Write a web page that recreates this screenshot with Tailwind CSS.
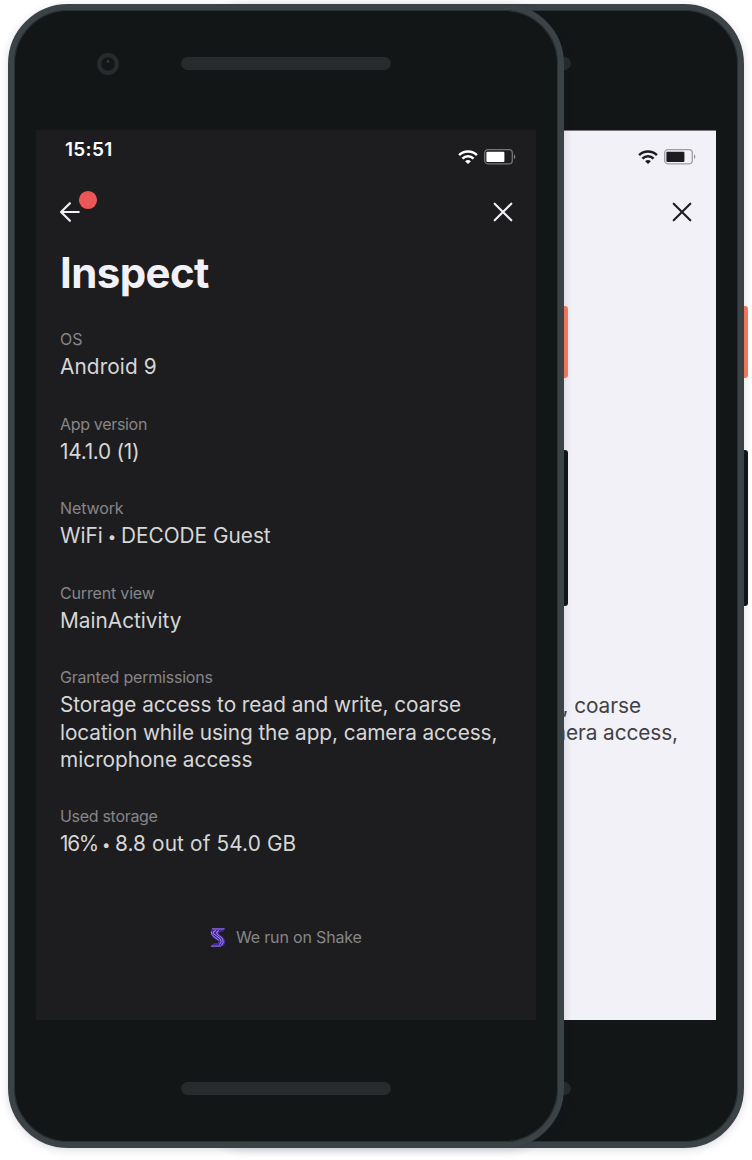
<!DOCTYPE html>
<html lang="en">
<head>
<meta charset="utf-8">
<title>Inspect</title>
<script src="https://cdn.jsdelivr.net/npm/@tailwindcss/browser@4"></script>
</head>
<body class="relative h-[1160px] w-[752px] overflow-hidden bg-white font-['Inter',sans-serif]">
<svg class="hidden">
  <symbol id="wifi" viewBox="0 0 20 14"><g fill="none" stroke="currentColor" stroke-width="2.5"><path d="M1.1 5.1a12.6 12.6 0 0 1 17.8 0"/><path d="M4.4 8.7a7.9 7.9 0 0 1 11.2 0"/></g><path d="M10 13.9 7.1 11.3a4.2 4.2 0 0 1 5.8 0Z" fill="currentColor"/></symbol>
  <symbol id="battery" viewBox="0 0 32 16"><rect x=".7" y=".7" width="27.6" height="14.1" rx="3.2" fill="none" stroke="currentColor" stroke-opacity=".4" stroke-width="1.3"/><rect x="2.4" y="2.7" width="18" height="10.2" rx="1" fill="currentColor"/><path d="M30 5.3c1.8.8 1.8 4 0 4.9Z" fill="currentColor" opacity=".45"/></symbol>
  <symbol id="close" viewBox="0 0 20 20"><path d="m1.7 1.7 16.6 16.6M18.3 1.7 1.7 18.3" fill="none" stroke="currentColor" stroke-width="2.1" stroke-linecap="round"/></symbol>
</svg>

<!-- Light phone, behind -->
<div class="absolute left-[188px] top-1 h-[1144px] w-[556px]">
  <div class="absolute left-[550px] top-[302.4px] h-[72px] w-[10px] rounded-[3px] bg-[#fb7b5b]"></div>
  <div class="absolute left-[550px] top-[446.4px] h-[156px] w-[10px] rounded-[3px] bg-[#111516]"></div>
  <div class="relative flex h-full flex-col items-center rounded-[60px] border-6 border-[#3c4347] bg-[#121617] shadow-[0_2px_8px_rgba(30,30,70,0.16),inset_0_0_0_1px_#2b3134]">
    <div class="mt-[47px] h-[13px] w-[210px] rounded-full bg-[#272b2d]"></div>
    <div class="mt-[60px] flex h-[890px] w-[500px] flex-col border-t border-[#77777b] bg-[#f2f1f7] text-[#1d1d1f]">
      <div class="flex justify-end gap-[5.5px] pr-[20.5px] pt-[18px]">
        <svg class="mt-px h-[14px] w-[20px]"><use href="#wifi"/></svg>
        <svg class="h-4 w-8"><use href="#battery"/></svg>
      </div>
      <div class="mt-[37px] flex justify-end pr-6"><svg class="h-5 w-5"><use href="#close"/></svg></div>
      <div class="mt-[470px] text-right text-[20.8px] leading-[27.2px] text-[#414144]">
        <p class="pr-[75px] tracking-[-0.06px]">, coarse</p>
        <p class="pr-[38px] tracking-[-0.09px]">mera access,</p>
      </div>
    </div>
    <div class="mt-[62px] h-[13px] w-[210px] rounded-full bg-[#272b2d]"></div>
  </div>
</div>

<!-- Dark phone, in front -->
<div class="absolute left-2 top-1 h-[1144px] w-[556px]">
  <div class="absolute left-[550px] top-[302.4px] h-[72px] w-[10px] rounded-[3px] bg-[#fb7b5b]"></div>
  <div class="absolute left-[550px] top-[446.4px] h-[156px] w-[10px] rounded-[3px] bg-[#111516]"></div>
  <div class="relative flex h-full flex-col items-center rounded-[60px] border-6 border-[#3c4347] bg-[#121617] shadow-[0_2px_8px_rgba(30,30,70,0.16),inset_0_0_0_1px_#2b3134]">
    <svg class="absolute left-[83px] top-[43px] h-[22px] w-[22px]"><circle cx="11" cy="11" r="8.8" fill="none" stroke="#272b2d" stroke-width="4.2"/><circle cx="11" cy="8.5" r="1.4" fill="#34393b"/></svg>
    <div class="mt-[47px] h-[13px] w-[210px] rounded-full bg-[#272b2d]"></div>
    <div class="mt-[60px] flex h-[890px] w-[500px] flex-col bg-[#1d1d1f] text-white">
      <div class="flex justify-between pl-[29px] pr-[20.5px]">
        <span class="pt-[10px] text-[19px] font-semibold leading-5 tracking-[0.3px]">15:51</span>
        <div class="flex gap-[5.5px] pt-[19px]">
          <svg class="mt-px h-[14px] w-[20px]"><use href="#wifi"/></svg>
          <svg class="h-4 w-8"><use href="#battery"/></svg>
        </div>
      </div>
      <div class="mt-[25px] flex h-[32px] items-end justify-between pl-6 pr-[23px] text-[#f2f1f7]">
        <svg class="h-[32px] w-[38px]" viewBox="0 0 38 32"><path d="M9.9 13.3 1.1 22l8.8 8.7M1.3 22H18.7" fill="none" stroke="currentColor" stroke-width="2.2" stroke-linecap="round" stroke-linejoin="round"/><circle cx="28" cy="10" r="9.1" fill="#eb5757"/></svg>
        <svg class="h-5 w-5"><use href="#close"/></svg>
      </div>
      <h1 class="ml-6 mt-[26px] text-[42px] font-bold leading-[50px] tracking-[-0.6px] text-[#f2f1f7]">Inspect</h1>
      <dl class="ml-6 mt-[31px] flex flex-col gap-[33px] whitespace-nowrap text-[20.8px] leading-[27.2px] text-[#d6d6d7]">
        <div><dt class="mb-[4.3px] text-[16px] leading-5 text-[#868688]">OS</dt><dd class="tracking-[0.1px]">Android 9</dd></div>
        <div><dt class="mb-[4.3px] text-[16px] leading-5 tracking-[-0.32px] text-[#868688]">App version</dt><dd class="tracking-[-0.25px]">14.1.0 (1)</dd></div>
        <div><dt class="mb-[4.3px] text-[16px] leading-5 tracking-[-0.12px] text-[#868688]">Network</dt><dd>WiFi <span class="-mx-px align-[1px] text-[15px] leading-none">•</span> DECODE Guest</dd></div>
        <div><dt class="mb-[4.3px] text-[16px] leading-5 tracking-[-0.17px] text-[#868688]">Current view</dt><dd>MainActivity</dd></div>
        <div><dt class="mb-[4.3px] text-[16px] leading-5 tracking-[-0.21px] text-[#868688]">Granted permissions</dt><dd><span class="tracking-[-0.06px]">Storage access to read and write, coarse</span><br><span class="tracking-[-0.09px]">location while using the app, camera access,</span><br>microphone access</dd></div>
        <div><dt class="mb-[4.3px] text-[16px] leading-5 tracking-[-0.3px] text-[#868688]">Used storage</dt><dd class="tracking-[0.13px]"><span class="tracking-[-1.3px]">16%</span> <span class="-ml-[2px] -mr-[1.5px] align-[1px] text-[15px] leading-none">•</span> 8.8 out of 54.0 GB</dd></div>
      </dl>
      <div class="mt-[69.6px] flex h-5 items-center gap-[10px] pl-[174px] text-[16px] tracking-[-0.17px] text-[#868688]">
        <svg class="h-[19px] w-4" viewBox="0 0 16 19" fill="none"><path d="M2 .5h13L12.500 4H9.500L9 6l4.500 3.500q2.500 3 1.500 6-1 3-4 3H.8L4 15h4V13L3 9.500Q.5 7.500.7 4 1 1.500 2 .5Z" fill="#4526a0"/><path d="M2 .9h12.500M.9 18.100H11" stroke="#9b7cf0"/><path d="M6 2.500Q2.500 3 3.200 5.500l7 5.300q2.300 3-.7 5.700M9 2.500Q5.500 3.500 7 6l5.500 4.500q2 4-1 7M1.200 3.500q0 3 3 5.500l4.300 3.200" stroke="#b9a3f7" stroke-width=".8"/></svg>
        <span>We run on Shake</span>
      </div>
    </div>
    <div class="mt-[62px] h-[13px] w-[210px] rounded-full bg-[#272b2d]"></div>
  </div>
</div>
</body>
</html>
